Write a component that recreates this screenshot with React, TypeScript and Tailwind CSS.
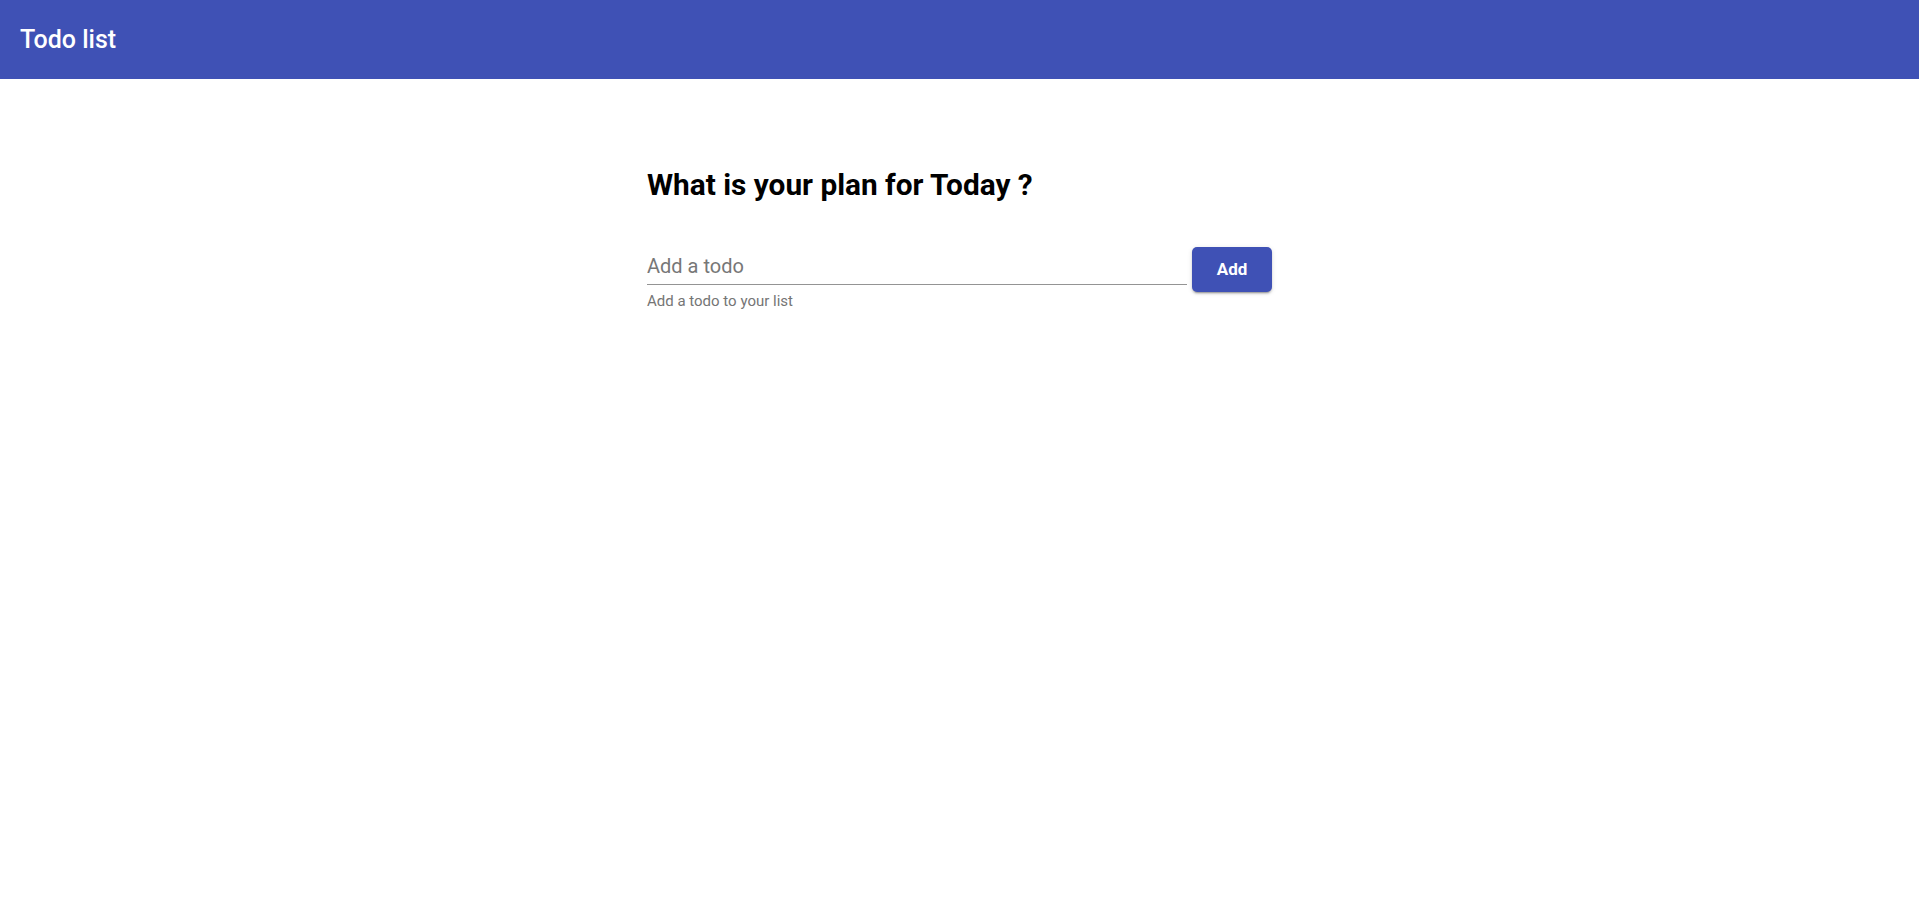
import React, { useState } from "react";

export default function App() {
  const [value, setValue] = useState("");
  return (
    <div className="min-h-screen bg-white" style={{ fontFamily: "Roboto, 'Noto Sans', Arial, sans-serif" }}>
      <header className="flex h-[79px] items-center bg-[#3f51b5] px-5">
        <h1 className="text-[25px] font-medium leading-[1.6] text-white">Todo list</h1>
      </header>
      <main className="mx-auto w-[625px] pt-[88px]">
        <h2 className="text-[29.8px] font-bold leading-[35px] text-black">What is your plan for Today ?</h2>
        <div className="mt-[45px] flex items-start gap-[5px]">
          <div className="flex flex-1 flex-col">
            <input
              value={value}
              onChange={(e) => setValue(e.target.value)}
              placeholder="Add a todo"
              className="h-[38px] w-full border-b border-[#949494] bg-transparent pt-[7px] pb-[6px] text-[20px] leading-[24px] text-[#212121] outline-none placeholder:text-[#777777]"
            />
            <p className="mt-[7px] text-[15px] leading-[18px] text-[#757575]">Add a todo to your list</p>
          </div>
          <button className="h-[45px] w-[80px] rounded-[5px] bg-[#3f51b5] text-[17px] font-bold text-white shadow-[0_3px_1px_-2px_rgba(0,0,0,0.2),0_2px_2px_0_rgba(0,0,0,0.14),0_1px_5px_0_rgba(0,0,0,0.12)]">
            Add
          </button>
        </div>
      </main>
    </div>
  );
}
